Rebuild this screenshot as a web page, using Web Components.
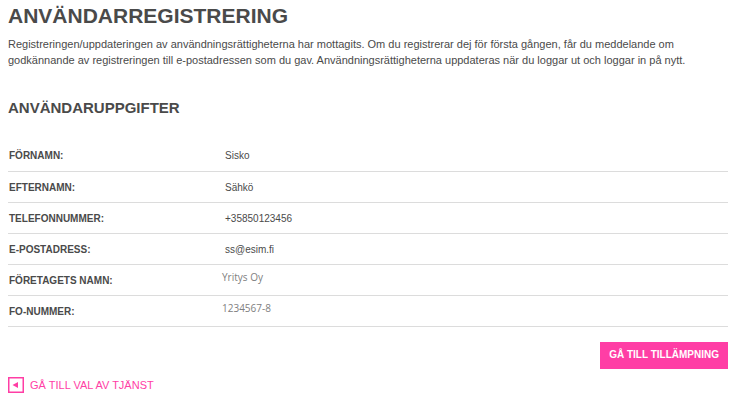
<!DOCTYPE html>
<html lang="sv">
<head>
<meta charset="utf-8">
<meta name="viewport" content="width=device-width, initial-scale=1">
<title>Användarregistrering</title>
<style>
body {
    margin: 0;
    background: #fff;
    color: #4a4a4a;
    font-family: Arial, "Liberation Sans", sans-serif;
    font-size: 11px;
    line-height: 16px;
}
</style>
</head>
<body>

<registration-page>
    <span slot="title">Användarregistrering</span>
    <span slot="intro">Registreringen/uppdateringen av användningsrättigheterna har mottagits. Om du registrerar dej för första gången, får du meddelande om godkännande av registreringen till e-postadressen som du gav. Användningsrättigheterna uppdateras när du loggar ut och loggar in på nytt.</span>
    <span slot="subtitle">Användaruppgifter</span>
    <user-details></user-details>
    <action-button slot="action">Gå till tillämpning</action-button>
    <back-link slot="back" href="#tjanster">Gå till val av tjänst</back-link>
</registration-page>

<script>
/**
 * <registration-page> — page frame
 *
 * Slots: title, intro, subtitle, (default), action, back
 */
class RegistrationPage extends HTMLElement {
    constructor() {
        super();
        this.attachShadow({ mode: 'open' }).innerHTML = `
            <style>
            :host { display: block; padding: 4px 12px 8px 8px; }
            h1, h2, p { margin: 0; }
            h1, h2 { text-transform: uppercase; }
            h1 { font-size: 21px; line-height: 24px; }
            p  { margin-top: 8px; padding-right: 20px; }
            h2 { margin-top: 30px; font-size: 15px; line-height: 20px; }
            .details { margin-top: 22px; }
            footer { display: flex; flex-direction: column; gap: 8px; margin-top: 15px; }
            .action { align-self: flex-end; }
            </style>
            <main>
                <h1><slot name="title"></slot></h1>
                <p><slot name="intro"></slot></p>
                <h2><slot name="subtitle"></slot></h2>
                <div class="details"><slot></slot></div>
                <footer>
                    <div class="action"><slot name="action"></slot></div>
                    <div><slot name="back"></slot></div>
                </footer>
            </main>
        `;
    }
}

// ── User details ───────────────────────────────────────────────────────────

const FIELDS = [
    { label: 'Förnamn',         value: 'Sisko' },
    { label: 'Efternamn',       value: 'Sähkö' },
    { label: 'Telefonnummer',   value: '+35850123456' },
    { label: 'E-postadress',    value: 'ss@esim.fi' },
    { label: 'Företagets namn', value: 'Yritys Oy', company: true },
    { label: 'FO-nummer',       value: '1234567-8', company: true },
];

/** <user-details> — read-only table of the registered user */
class UserDetails extends HTMLElement {
    constructor() {
        super();
        this.attachShadow({ mode: 'open' }).innerHTML = `
            <style>
            :host { display: block; }
            table { width: 100%; border-collapse: collapse; table-layout: fixed; }
            th, td {
                box-sizing: border-box;
                height: 31px;
                padding: 2px 0 0 5px;
                border-bottom: 1px solid #dcdcdc;
                font-size: 10px;
                line-height: 16px;
                text-align: left;
            }
            th { width: 212px; padding-left: 1px; text-transform: uppercase; }
            td.company {
                padding: 4px 0 0 2px;
                color: #808080;
                font-family: "Open Sans", sans-serif;
                vertical-align: top;
            }
            </style>
            <table><tbody></tbody></table>
        `;
    }

    connectedCallback() {
        this.shadowRoot.querySelector('tbody').innerHTML = FIELDS.map(f => `
            <tr>
                <th scope="row">${f.label}:</th>
                <td${f.company ? ' class="company"' : ''}>${f.value}</td>
            </tr>
        `).join('');
    }
}

// ── Controls ───────────────────────────────────────────────────────────────

/** <action-button> — primary button */
class ActionButton extends HTMLElement {
    constructor() {
        super();
        this.attachShadow({ mode: 'open' }).innerHTML = `
            <style>
            :host { display: block; }
            button {
                display: block;
                padding: 5px 9px 6px;
                border: 0;
                background: #ff3ea5;
                color: #fff;
                font: bold 10px/16px Arial, "Liberation Sans", sans-serif;
                text-transform: uppercase;
                cursor: pointer;
            }
            button:hover { background: #e62e90; }
            </style>
            <button type="button"><slot></slot></button>
        `;
    }
}

/** <back-link> — link with a boxed arrow. Attributes: href */
class BackLink extends HTMLElement {
    constructor() {
        super();
        this.attachShadow({ mode: 'open' }).innerHTML = `
            <style>
            :host { display: block; }
            a {
                display: flex;
                width: fit-content;
                align-items: center;
                gap: 6px;
                color: #ff3ea5;
                text-decoration: none;
                text-transform: uppercase;
            }
            a:hover { text-decoration: underline; }
            svg { flex: none; }
            </style>
            <a>
                <svg width="16" height="16" viewBox="0 0 16 16" aria-hidden="true">
                    <rect x=".75" y=".75" width="14.5" height="14.5" fill="#fff" stroke="#ff3ea5" stroke-width="1.5"/>
                    <path d="M4.5 8 10 5V11Z" fill="#ff3ea5"/>
                </svg>
                <span><slot></slot></span>
            </a>
        `;
    }

    connectedCallback() {
        this.shadowRoot.querySelector('a').href = this.getAttribute('href') ?? '#';
    }
}

customElements.define('registration-page', RegistrationPage);
customElements.define('user-details', UserDetails);
customElements.define('action-button', ActionButton);
customElements.define('back-link', BackLink);
</script>
</body>
</html>
